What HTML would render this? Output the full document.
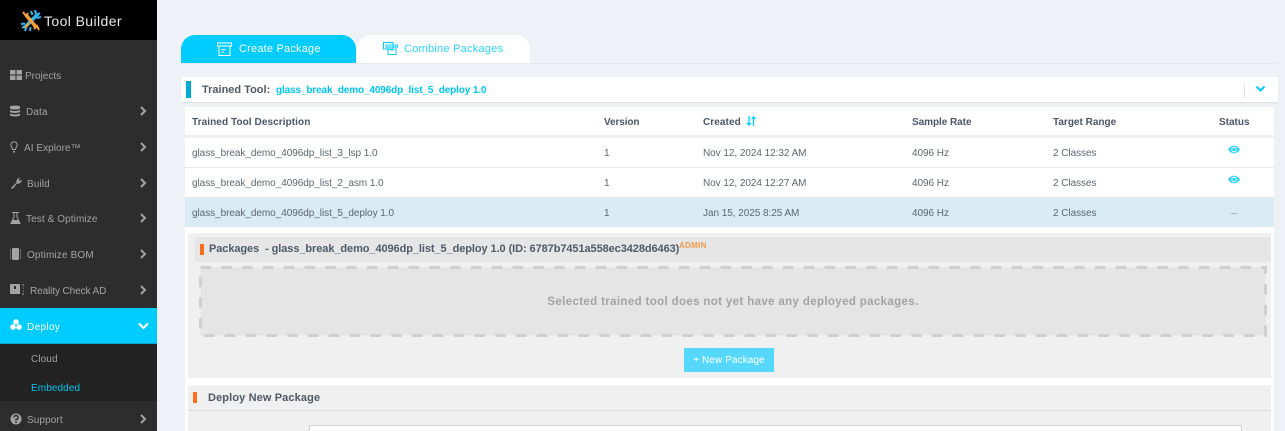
<!DOCTYPE html>
<html style="overflow:hidden;width:1285px;height:431px"><head><meta charset="utf-8"><style>
html,body{margin:0;padding:0}
body{width:1285px;height:431px;overflow:hidden;position:relative;background:#eef2f6;font-family:"Liberation Sans",sans-serif;font-size:10px;color:#55606e}
div,span,svg{position:absolute;white-space:nowrap}
.r{background:#fff}
.m{color:#a3a3a3;font-size:10px;line-height:14px;letter-spacing:.1px;margin-top:1px}
.c{position:absolute;left:0;top:0}
.h{font-weight:bold;color:#4a5666;font-size:10px;line-height:14px;letter-spacing:.08px}
.t{line-height:14px;font-size:10px;color:#5c6670;letter-spacing:-.05px}
</style></head><body>
<div id="clip" style="left:0;top:0;width:1285px;height:431px;overflow:hidden">
<div style="left:0;top:0;width:157px;height:431px;background:#2d2d2d"></div>
<div style="left:0;top:0;width:157px;height:40px;background:#000"></div>
<svg style="left:20px;top:10px" width="22" height="22" viewBox="0 0 22 22"><path d="M4 18L18 4" stroke="#2fb6ea" stroke-width="3.500"/><path d="M11 1l1.500 4M15 0l1 4M20 3l-3 2M21 7l-4 1M1 14l4-.5M2 18l3-2M5 21l1.500-4M10 21l.5-4" stroke="#2fb6ea" stroke-width="2" fill="none"/><path d="M6 5L16 17" stroke="#f7a13d" stroke-width="3.500"/><path d="M3 2L6 6 8 3M14 19l3-3 2 4M9 13l-4 5" stroke="#f7a13d" stroke-width="2" fill="none"/></svg>
<div style="left:44px;top:12px;color:#e8e8e8;font-size:14px;line-height:18px;letter-spacing:.4px">Tool Builder</div>

<svg style="left:10px;top:70px" width="12" height="10"><path d="M0 0h5.500v4.500H0zM6.500 0H12v4.500H6.500zM0 5.500h5.500V10H0zM6.500 5.500H12V10H6.500z" fill="#a3a3a3"/></svg><div class="m" style="left:25px;top:69px;letter-spacing:0">Projects</div>
<svg style="left:10px;top:105px" width="10" height="12"><path d="M0 1.500C0 .3 10 .3 10 1.500V3.500C10 4.800 0 4.800 0 3.500zM0 5C2 6.300 8 6.300 10 5V7C8 8.300 2 8.300 0 7zM0 8.500C2 9.800 8 9.800 10 8.500V10.500C8 11.800 2 11.800 0 10.500z" fill="#a3a3a3"/></svg><div class="m" style="left:26px;top:105px">Data</div>
<svg style="left:10px;top:141px" width="8" height="12"><path d="M4 .7A3.300 3.300 0 0 1 6 6.500L5.500 8.500H2.500L2 6.500A3.300 3.300 0 0 1 4 .7z" fill="none" stroke="#a3a3a3"/><path d="M3 10h2v1.500H3z" fill="#a3a3a3"/></svg><div class="m" style="left:24px;top:141px;letter-spacing:.05px">AI Explore™</div>
<svg style="left:10px;top:177px" width="12" height="12"><path d="M1 11L6.500 5.500A3.500 3.500 0 0 1 10 1L8.500 3 9.500 4 11.500 2.500A3.500 3.500 0 0 1 7 6.500L2.500 12z" fill="#a3a3a3"/></svg><div class="m" style="left:27px;top:177px">Build</div>
<svg style="left:10px;top:212px" width="11" height="12"><path d="M2 .5H9M4 1V5L1 11.500H10L7 5V1" fill="none" stroke="#a3a3a3"/><path d="M2.500 8H8.500L10 11.500H1z" fill="#a3a3a3"/></svg><div class="m" style="left:26px;top:212px;letter-spacing:.1px">Test &amp; Optimize</div>
<svg style="left:10px;top:248px" width="11" height="12"><rect x="2" y="0" width="7" height="12" rx="1" fill="#a3a3a3"/><path d="M0 2h1M0 4h1M0 6h1M0 8h1M0 10h1M10 2h1M10 4h1M10 6h1M10 8h1M10 10h1" stroke="#a3a3a3"/></svg><div class="m" style="left:27px;top:248px;letter-spacing:.15px">Optimize BOM</div>
<svg style="left:10px;top:284px" width="14" height="11"><path d="M0 1a1 1 0 0 1 1-1H10V10H1a1 1 0 0 1-1-1z" fill="#a3a3a3"/><path d="M4 2h2v3H4z" fill="#2d2d2d"/><path d="M12 1h2M13 4h1M13 7h1M12 10h2" stroke="#a3a3a3"/></svg><div class="m" style="left:30px;top:284px;letter-spacing:-.1px">Reality Check AD</div>
<div style="left:0;top:308px;width:157px;height:35px;background:#00ccff"></div><div style="left:0;top:343px;width:157px;height:1px;background:#00a4cc"></div>
<svg style="left:10px;top:319px" width="12" height="11"><circle cx="6" cy="3" r="2.800" fill="#fff"/><circle cx="3" cy="8" r="2.800" fill="#fff"/><circle cx="9" cy="8" r="2.800" fill="#fff"/><circle cx="6" cy="6" r="1" fill="#00ccff"/></svg><div class="m" style="left:27px;top:320px;color:#fff;letter-spacing:.35px">Deploy</div>
<div style="left:0;top:344px;width:157px;height:57px;background:#222"></div>
<div class="m" style="left:31px;top:352px">Cloud</div>
<div class="m" style="left:31px;top:381px;color:#00c4f0">Embedded</div>
<svg style="left:10px;top:413px" width="12" height="12"><circle cx="6" cy="6" r="5.500" fill="#a3a3a3"/><path d="M4 4.500A2 2 0 1 1 6 6.500V7.500" fill="none" stroke="#2d2d2d" stroke-width="1.500"/><path d="M5.200 8.500h1.600V10H5.200z" fill="#2d2d2d"/></svg><div class="m" style="left:27px;top:413px">Support</div>

<svg class="c" style="left:139px;top:106px" width="8" height="325" fill="none" stroke="#a3a3a3" stroke-width="2"><path d="M2 1L6 5 2 9M2 37L6 41 2 45M2 73L6 77 2 81M2 108L6 112 2 116M2 144L6 148 2 152M2 180L6 184 2 188M2 309L6 313 2 317"/></svg>
<svg style="left:138px;top:322px" width="11" height="8" fill="none" stroke="#fff" stroke-width="2.200"><path d="M1 1.500L5.500 6 10 1.500"/></svg>

<div style="left:181px;top:63px;width:1098px;height:1px;background:#e6eaee"></div>
<div style="left:181px;top:35px;width:175px;height:28px;background:#00ccff;border-radius:14px 14px 0 0"></div>
<div style="left:357px;top:35px;width:173px;height:28px;background:#fff;border-radius:14px 14px 0 0"></div>
<svg style="left:217px;top:42px" width="15" height="14" fill="none" stroke="#fff"><path d="M.5 1h14v3H.5zM2 4v9.500H13V4M4.500 7.500h4M4.500 10h2.500"/></svg>
<div style="left:239px;top:41px;font-size:11px;line-height:16px;color:#fff;letter-spacing:.2px">Create Package</div>
<svg style="left:383px;top:42px" width="15" height="13" fill="none" stroke="#00ccff"><path d="M.5.500H10V7H.5zM3 3H14.500V5H3zM5 5V12.500H13V5M7 8H10"/></svg>
<div style="left:404px;top:41px;font-size:11px;line-height:16px;color:#2dd3fb;letter-spacing:.25px">Combine Packages</div>

<div class="r" style="left:181px;top:77px;width:1097px;height:25px;box-shadow:0 1px 1px #ddd"></div>
<div style="left:186px;top:81px;width:5px;height:17px;background:#00a8d4"></div>
<div style="left:202px;top:83px;font-size:11px;line-height:15px;font-weight:bold;color:#4e5866;letter-spacing:0">Trained Tool:</div>
<div style="left:276px;top:83px;font-size:10px;line-height:15px;font-weight:bold;color:#00c4f2;letter-spacing:-.13px">glass_break_demo_4096dp_list_5_deploy 1.0</div>
<div style="left:1244px;top:84px;width:1px;height:14px;background:#e0e0e0"></div>
<svg style="left:1255px;top:85px" width="11" height="8" fill="none" stroke="#00ccff" stroke-width="2"><path d="M1.500 1.500L5.500 5.500 9.500 1.500"/></svg>

<div style="left:185px;top:107px;width:1089px;height:324px;background:#fff"></div>
<div style="left:185px;top:135px;width:1089px;height:3px;background:#f0f0f0"></div>
<div style="left:185px;top:167px;width:1089px;height:1px;background:#e8e8e8"></div>
<div style="left:185px;top:197px;width:1089px;height:1px;background:#e2e8ec"></div>
<div style="left:185px;top:198px;width:1089px;height:29px;background:#d9ebf5"></div>

<div class="h" style="left:192px;top:116px">Trained Tool Description</div>
<div class="h" style="left:604px;top:116px;letter-spacing:-.1px">Version</div>
<div class="h" style="left:703px;top:116px">Created</div>
<svg style="left:746px;top:116px" width="10" height="10" fill="none" stroke="#00ccff" stroke-width="1.300"><path d="M3 0V9M1 7L3 9 5 7M7.500 10V1M5.500 3L7.500 1 9.500 3"/></svg>
<div class="h" style="left:912px;top:116px;letter-spacing:-.05px">Sample Rate</div>
<div class="h" style="left:1053px;top:116px;letter-spacing:0">Target Range</div>
<div class="h" style="left:1219px;top:116px;letter-spacing:0">Status</div>

<div class="t" style="left:192px;top:147px">glass_break_demo_4096dp_list_3_lsp 1.0</div><div class="t" style="left:604px;top:147px">1</div><div class="t" style="left:703px;top:147px">Nov 12, 2024 12:32 AM</div><div class="t" style="left:912px;top:147px">4096 Hz</div><div class="t" style="left:1053px;top:147px">2 Classes</div>
<svg style="left:1228px;top:145px" width="12" height="9"><path d="M0 4.500C3 -.5 9 -.5 12 4.500 9 9.500 3 9.500 0 4.500z" fill="#2dd3fb"/><circle cx="6" cy="4.500" r="2.700" fill="#fff"/><circle cx="6" cy="4.500" r="1.800" fill="#2dd3fb"/></svg>
<div class="t" style="left:192px;top:177px">glass_break_demo_4096dp_list_2_asm 1.0</div><div class="t" style="left:604px;top:177px">1</div><div class="t" style="left:703px;top:177px">Nov 12, 2024 12:27 AM</div><div class="t" style="left:912px;top:177px">4096 Hz</div><div class="t" style="left:1053px;top:177px">2 Classes</div>
<svg style="left:1228px;top:175px" width="12" height="9"><path d="M0 4.500C3 -.5 9 -.5 12 4.500 9 9.500 3 9.500 0 4.500z" fill="#2dd3fb"/><circle cx="6" cy="4.500" r="2.700" fill="#fff"/><circle cx="6" cy="4.500" r="1.800" fill="#2dd3fb"/></svg>
<div class="t" style="left:192px;top:207px">glass_break_demo_4096dp_list_5_deploy 1.0</div><div class="t" style="left:604px;top:207px">1</div><div class="t" style="left:703px;top:207px">Jan 15, 2025 8:25 AM</div><div class="t" style="left:912px;top:207px">4096 Hz</div><div class="t" style="left:1053px;top:207px">2 Classes</div>
<div style="left:1231px;top:213px;width:6px;height:1px;background:#a8b0b6"></div>

<div style="left:188px;top:233px;width:1083px;height:145px;background:#f0f0f0"></div>
<div style="left:195px;top:237px;width:1076px;height:25px;background:#e6e6e6"></div>
<div style="left:200px;top:244px;width:4px;height:11px;background:#f7701d"></div>
<div style="left:209px;top:242px;font-size:11px;line-height:15px;font-weight:bold;color:#4e5a6a;letter-spacing:-.08px">Packages&nbsp; - glass_break_demo_4096dp_list_5_deploy 1.0 (ID: 6787b7451a558ec3428d6463)</div>
<div style="left:679px;top:241px;font-size:8px;line-height:9px;color:#f79a4c;letter-spacing:.3px;font-weight:bold">ADMIN</div>
<svg style="left:199px;top:266px" width="1068px" height="71" viewBox="0 0 1068 71"><rect x="1.500" y="1.500" width="1065" height="68" fill="#e5e5e5" stroke="#cfcfcf" stroke-width="3" stroke-dasharray="10.500 10.300"/></svg>
<div style="left:199px;top:295px;width:1068px;text-align:center;font-size:11.500px;line-height:15px;font-weight:bold;color:#a3a3a3;letter-spacing:.36px">Selected trained tool does not yet have any deployed packages.</div>
<div style="left:684px;top:348px;width:90px;height:24px;background:#55d8fc;color:#fff;text-align:center;font-size:10px;line-height:25px;letter-spacing:.1px"><span style="position:static">+ New Package</span></div>

<div style="left:188px;top:385px;width:1083px;height:46px;background:#f0f0f0"></div>
<div style="left:188px;top:410px;width:1083px;height:1px;background:#dcdcdc"></div>
<div style="left:193px;top:392px;width:4px;height:11px;background:#f7701d"></div>
<div style="left:208px;top:391px;font-size:11px;line-height:15px;font-weight:bold;color:#4e5866;letter-spacing:.12px">Deploy New Package</div>
<div style="left:309px;top:425px;width:931px;height:5px;background:#fff;border:1px solid #cfcfcf;border-bottom:0;border-radius:2px 2px 0 0"></div>
</div>
</body></html>
